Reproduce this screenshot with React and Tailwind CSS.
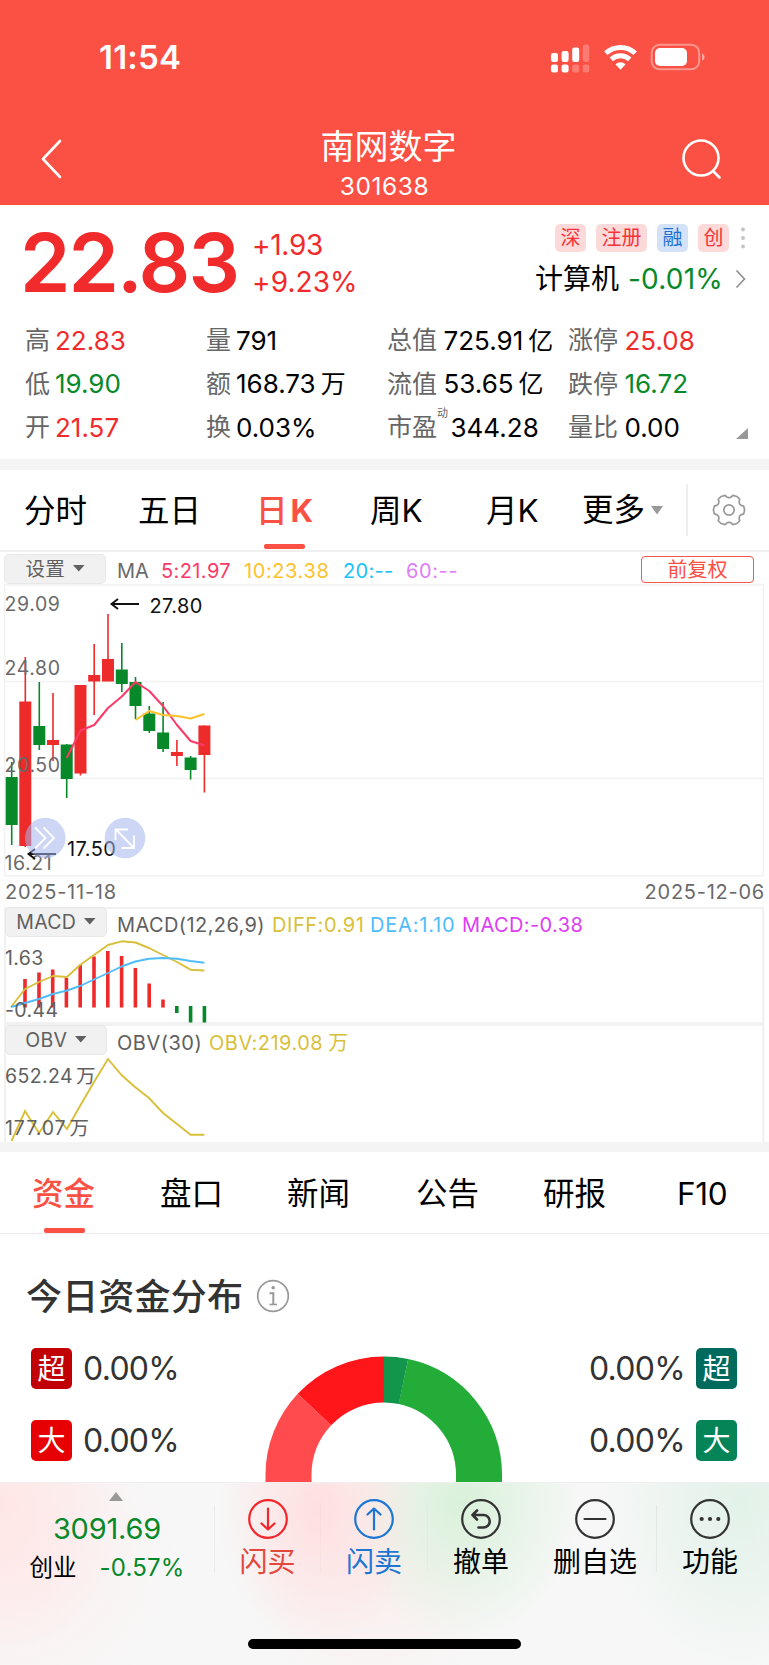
import React from "react";

const RED = "#ee2b2b";
const GREEN = "#07892a";

const Caret = ({ className }) => (
  <svg viewBox="0 0 12 7" preserveAspectRatio="none" className={className}>
    <path d="M0 0h12L6 7z" fill="currentColor" />
  </svg>
);

function StatusBar() {
  return (
    <div className="flex h-[116px] items-center pl-[99px]">
      <div className="-mt-[1px] w-[452px] text-[33px] leading-none font-semibold tracking-[0.200px]">11:54</div>
      <svg width="160" height="32" viewBox="0 0 160 32" className="shrink-0">
        <g fill="#fff">
          <rect x="0" y="11" width="7" height="9" rx="2.2" />
          <rect x="10.6" y="9" width="7" height="11" rx="2.2" />
          <rect x="21.2" y="5.500" width="7" height="14.500" rx="2.2" />
          <rect x="31.800" y="2.500" width="6.500" height="17.500" rx="2.200" opacity=".25" />
          <rect x="0" y="22.500" width="7" height="8" rx="2.2" />
          <rect x="10.600" y="22.500" width="7" height="8" rx="2.2" />
          <rect x="21.200" y="22.500" width="7" height="8" rx="2.2" opacity=".25" />
          <rect x="31.800" y="22.500" width="6.500" height="8" rx="2.2" opacity=".25" />
        </g>
        <g transform="translate(0 -1)">
          <g fill="none" stroke="#fff" strokeWidth="5">
            <path d="M54.800 12.200A21.500 21.500 0 0 1 84.200 12.200" />
            <path d="M60.300 18.300A13.500 13.500 0 0 1 78.700 18.300" />
          </g>
          <path d="M69.500 28.800L64.400 23.200A7.500 7.500 0 0 1 74.600 23.200Z" fill="#fff" />
          <rect x="100.700" y="3.700" width="47.500" height="24.600" rx="8" fill="none" stroke="#fff" strokeOpacity=".4" strokeWidth="2" />
          <rect x="104" y="7" width="32" height="18" rx="5" fill="#fff" />
          <path d="M151 12.500c3.400 1.200 3.400 6 0 7.200z" fill="#fff" opacity=".5" />
        </g>
      </svg>
    </div>
  );
}

function Header() {
  return (
    <header className="h-[205px] bg-[#fb5044] text-white">
      <StatusBar />
      <div className="flex h-[85px] items-center px-10">
        <svg width="100" height="44" viewBox="0 0 100 44" className="shrink-0">
          <path d="M20 4L3 22L20 40" fill="none" stroke="#fff" strokeWidth="2.600" strokeLinecap="round" strokeLinejoin="round" />
        </svg>
        <div className="flex flex-1 flex-col items-center pt-[8px] pl-[8px]">
          <div className="text-[34px] leading-[46px]">南网数字</div>
          <div className="-ml-[8px] text-[24.500px] leading-[32px] tracking-[0.600px]">301638</div>
        </div>
        <svg width="100" height="44" viewBox="0 0 100 44" className="shrink-0">
          <circle cx="72" cy="21" r="17.500" fill="none" stroke="#fff" strokeWidth="2.600" />
          <path d="M84 34L90.500 40.500" stroke="#fff" strokeWidth="2.600" strokeLinecap="round" />
        </svg>
      </div>
    </header>
  );
}

const Tag = ({ children, blue }) => (
  <span className={"flex h-[28px] items-center rounded-[5px] px-[5.500px] text-[20px] leading-none " + (blue ? "bg-[#d3e2f6] text-[#1d71d2]" : "bg-[#fddada] text-[#f63338]")}>
    {children}
  </span>
);

const STATS = [
  ["高", "22.83", "text-[#f12b2c]"], ["量", "791", "text-black"], ["总值", "725.91", "text-black", "亿"], ["涨停", "25.08", "text-[#f12b2c]"],
  ["低", "19.90", "text-[#07892a]"], ["额", "168.73", "text-black", "万"], ["流值", "53.65", "text-black", "亿"], ["跌停", "16.72", "text-[#07892a]"],
  ["开", "21.57", "text-[#f12b2c]"], ["换", "0.03%", "text-black"], ["市盈", "344.28", "text-black"], ["量比", "0.00", "text-black"],
];

function Quote() {
  return (
    <section className="h-[254px]">
      <div className="flex h-[114px] items-start text-[#f12b2c]">
        <div className="w-[230px] pl-[20px] text-[81px] leading-[116px] font-semibold tracking-[-2px]">22.83</div>
        <div className="pt-[22px] pl-[22px] text-[28px] leading-[37px]">
          <div className="tracking-[-0.300px]">+1.93</div>
          <div className="tracking-[0.100px]">+9.23%</div>
        </div>
        <div className="ml-auto flex flex-col items-end pt-[19px] pr-[22px]">
          <div className="flex items-center gap-[10px]">
            <Tag>深</Tag>
            <Tag>注册</Tag>
            <Tag blue>融</Tag>
            <Tag>创</Tag>
            <svg width="4" height="22" viewBox="0 0 4 22" className="mx-[2px]">
              <g fill="#c4c4c4"><circle cx="2" cy="2.500" r="2" /><circle cx="2" cy="11" r="2" /><circle cx="2" cy="19.500" r="2" /></g>
            </svg>
          </div>
          <div className="mt-[7px] mr-[1px] flex items-center text-[28px] leading-[40px]">
            <span className="text-black">计算机</span>
            <span className="ml-[9px] w-[107px] tracking-[0.200px] whitespace-nowrap text-[#07892a]">-0.01%</span>
            <svg width="11" height="20" viewBox="0 0 11 20">
              <path d="M1.500 1.500L9.500 10L1.500 18.500" fill="none" stroke="#8c8c8c" strokeWidth="1.600" />
            </svg>
          </div>
        </div>
      </div>
      <div className="grid grid-cols-[181px_181px_181px_1fr] pl-[25px]">
        {STATS.map(([label, value, color, unit]) => (
          <div key={label} className="flex h-[43.500px] items-center whitespace-nowrap">
            <span className="text-[25px] leading-none text-[#666]">{label}</span>
            {label === "市盈" && <span className="-mr-[4px] -mt-[29px] text-[11px] leading-none text-[#666]">动</span>}
            <span className={"text-[26px] leading-none tracking-[0px] " + (label.length > 1 ? "ml-[6.500px] " : "ml-[5px] ") + color}>
              {value}
              {unit && <span className="ml-[5px] text-[25px]">{unit}</span>}
            </span>
            {label === "量比" && (
              <svg width="12" height="11" viewBox="0 0 12 11" className="mt-[12px] mr-[21px] ml-auto">
                <path d="M12 0V11H0z" fill="#999" />
              </svg>
            )}
          </div>
        ))}
      </div>
    </section>
  );
}

// Outline of a six-toothed cog, as [radius, degrees from the tooth's axis].
const COG_PROFILE = [[13, -21], [15.2, -15], [15.6, 0], [15.2, 15], [13, 21], [12.2, 30]];
const COG_POINTS = [0, 60, 120, 180, 240, 300]
  .flatMap((base) => COG_PROFILE.map(([r, a]) => {
    const t = ((base + a) * Math.PI) / 180;
    return `${(r * Math.cos(t)).toFixed(2)},${(r * Math.sin(t)).toFixed(2)}`;
  }))
  .join(" ");

function PeriodTabs() {
  return (
    <nav className="flex h-[82px] border-b-2 border-[#efefef] pl-[24px] text-[31.500px] leading-[82px] whitespace-nowrap text-black">
      <div className="w-[114px]">分时</div>
      <div className="w-[122px]">五日</div>
      <div className="flex w-[110px] flex-col">
        <div className="-ml-[4px] h-[74px] text-[#fb5044]"><span className="font-medium">日</span><span className="ml-[3px] font-bold">K</span></div>
        <div className="ml-[4px] h-[5px] w-[41px] rounded-[2px] bg-[#fb5044]" />
      </div>
      <div className="w-[116px]">周K</div>
      <div className="w-[96px]">月K</div>
      <div className="flex w-[104px] items-center">
        更多
        <Caret className="ml-[6px] h-[8.500px] w-[12px] text-[#999]" />
      </div>
      <div className="mt-[14px] h-[52px] w-[2px] bg-[#eeeeee]" />
      <svg width="34" height="34" viewBox="-17 -17 34 34" className="mt-[23px] ml-[24px]" fill="none" stroke="#999" strokeWidth="1.700" strokeLinejoin="round">
        <polygon points={COG_POINTS} />
        <circle r="5.200" />
      </svg>
    </nav>
  );
}

const CANDLES = [
  [11.7, 777, 825, 762, 845, GREEN], [25.3, 701.5, 846, 657, 847, RED], [39.3, 726, 745, 682, 750, GREEN],
  [53, 740, 745, 693, 761, RED], [66.7, 744.5, 779, 744, 798, GREEN], [80.5, 685, 773.5, 685, 775.5, RED],
  [94.2, 675, 681.5, 644, 715, RED], [108, 659, 681.5, 614, 681, RED], [121.8, 669.5, 684, 643, 692, GREEN],
  [135.5, 682, 706, 677, 719, GREEN], [149.3, 713.5, 731, 706, 733, GREEN], [163.1, 732.5, 749, 702, 752, GREEN],
  [176.9, 752, 756, 740, 766, RED], [190.6, 757.5, 770, 756, 779.5, GREEN], [204.4, 725.5, 755, 725.5, 792.5, RED],
];

function KLine() {
  return (
    <svg width="769" height="293" viewBox="0 584 769 293" className="block">
      <g stroke="#f2f2f2" strokeWidth="1.500">
        <path d="M4 585H764M4 681.500H764M4 778.500H764M4 875.800H764M4.800 584.500V876M763.200 584.500V876" fill="none" />
      </g>
      {CANDLES.map(([x, top, bottom, high, low, color]) => (
        <g key={x} fill={color}>
          <rect x={x - 0.8} y={high} width="1.600" height={low - high} />
          <rect x={x - 6} y={top} width="12" height={bottom - top} />
        </g>
      ))}
      <g fontSize="19.500" fill="#6a6a6a" letterSpacing=".6">
        <text x="4.500" y="610.500">29.09</text>
        <text x="4.500" y="675">24.80</text>
        <text x="4.500" y="772">20.50</text>
        <text x="4.500" y="869.500">16.21</text>
      </g>
      <g fill="none" strokeWidth="2" strokeLinejoin="round">
        <path stroke="#fc3a68" d="M66.700 758L80.500 730.500L94.200 725L108 708L121.800 696.500L135.500 682L149.300 691L163 706L177 725L190.600 741L204.400 745.500" />
        <path stroke="#fcc22b" d="M135.500 720L149.300 711L163 715L177 716L190.600 718.500L204.400 714" />
      </g>
      <g fontSize="20" fill="#111" letterSpacing=".4">
        <text x="149.500" y="612.500">27.80</text>
        <text x="67" y="855.500">17.50</text>
      </g>
      <path d="M139 604H111.500M118 599L111.500 604L118 609M56 854H28.500M35 849L28.500 854L35 859" fill="none" stroke="#111" strokeWidth="1.900" />
      <g>
        <circle cx="45.300" cy="838" r="20.300" fill="#a4b7ec" fillOpacity=".55" />
        <circle cx="125" cy="838" r="20.300" fill="#a4b7ec" fillOpacity=".55" />
        <g fill="none" stroke="#fff" strokeWidth="1.800">
          <path d="M35 827.500L45.500 838L35 848.500M43.500 827.500L54 838L43.500 848.500" />
          <path d="M115.500 840V829.500H128M116 829.500L134 848M134 835.500V848H121.500" />
        </g>
      </g>
    </svg>
  );
}

const Pill = ({ children }) => (
  <div className="flex h-[30px] w-[102px] items-center justify-center gap-[8px] rounded-[5px] border border-[#e8e8e8] bg-[#f1f1f1] pt-[2px] text-[19.500px] leading-none tracking-[0.300px] text-[#606060]">
    {children}
    <Caret className="-mt-[3px] h-[6.500px] w-[11.500px]" />
  </div>
);

const MACD_BARS = [
  [25, 979], [39, 972.5], [52.7, 969.5], [66.4, 978], [80.2, 965], [94, 956.5], [107.8, 951], [121.6, 956], [135.4, 968], [149.2, 983.5], [163, 999.5],
];

function MacdPanel() {
  return (
    <div className="grid h-[117px]">
      <svg width="769" height="117" viewBox="0 907 769 117" className="[grid-area:1/1]">
        <path d="M4 908H764M4 1023H764M5 907.500V1024M763.200 907.500V1024" fill="none" stroke="#f1f1f1" strokeWidth="2" />
        {MACD_BARS.map(([x, y]) => <rect key={x} x={x - 1.8} y={y} width="3.600" height={1007.500 - y} fill={RED} />)}
        <g fill={GREEN}>
          <rect x="175" y="1006" width="3.600" height="7" />
          <rect x="188.800" y="1006" width="3.600" height="16.500" />
          <rect x="202.600" y="1006" width="3.600" height="16.500" />
        </g>
        <g fill="none" strokeWidth="1.900" strokeLinejoin="round">
          <path stroke="#d8c03a" d="M11 1007L25 989L39 982L53 976L67 977L80 965L94 955L108 945L121.500 941.300L135.500 942.500L149 948L163 955L177 962L190.500 969.700L204.400 970.500" />
          <path stroke="#4fbcfb" d="M11 1007L25 1003L39 999L53 994L67 990.500L80 986L94 979.500L108 973L121.500 966.500L135.500 961.500L149 958.700L163 958L177 958.700L190.500 961L204.400 962.700" />
        </g>
        <g fontSize="19.500" fill="#606060" letterSpacing=".4">
          <text x="5" y="965">1.63</text>
          <text x="5" y="1016.500">-0.44</text>
        </g>
      </svg>
      <div className="flex h-[32px] items-start pl-[5px] text-[20px] leading-[37px] whitespace-nowrap [grid-area:1/1]">
        <Pill>MACD</Pill>
        <span className="ml-[10px] w-[155px] tracking-[0.400px] text-[#606060]">MACD(12,26,9)</span>
        <span className="w-[98px] tracking-[0.550px] text-[#d8c03a]">DIFF:0.91</span>
        <span className="w-[92px] tracking-[0.800px] text-[#4fbcfb]">DEA:1.10</span>
        <span className="tracking-[0.400px] text-[#dd3df2]">MACD:-0.38</span>
      </div>
    </div>
  );
}

function ObvPanel() {
  return (
    <div className="grid h-[118px]">
      <svg width="769" height="118" viewBox="0 1024 769 118" className="[grid-area:1/1]">
        <path d="M4 1025H764M5 1024V1142M763.200 1024V1142" fill="none" stroke="#f1f1f1" strokeWidth="2" />
        <path fill="none" stroke="#d8c03a" strokeWidth="1.900" d="M11.500 1141L25 1111L39 1133L53 1112L67 1129L80 1106L94 1082L108 1059L121.500 1075L135 1087L149 1098L163 1113L177 1124L190.600 1134.700L204.400 1134.700" />
        <g fontSize="19.500" fill="#606060" letterSpacing=".4">
          <text x="5" y="1082.500">652.24<tspan dx="3">万</tspan></text>
          <text x="5" y="1134.500" letterSpacing=".9">177.07<tspan dx="3">万</tspan></text>
        </g>
      </svg>
      <div className="flex h-[32px] items-start pt-px pl-[5px] text-[20px] leading-[37px] whitespace-nowrap [grid-area:1/1]">
        <Pill>OBV</Pill>
        <span className="ml-[10px] w-[92px] tracking-[0.500px] text-[#606060]">OBV(30)</span>
        <span className="tracking-[0.500px] text-[#d8c03a]">OBV:219.08<span className="ml-[5px]">万</span></span>
      </div>
    </div>
  );
}

function Charts() {
  return (
    <section>
      <div className="flex h-[32px] items-center pt-[2px] pl-[4px] text-[20px] leading-none whitespace-nowrap">
        <Pill>设置</Pill>
        <span className="mt-[3px] ml-[11px] w-[44px] text-[#6a6a6a]">MA</span>
        <span className="mt-[3px] w-[83px] tracking-[0.400px] text-[#fc3a68]">5:21.97</span>
        <span className="mt-[3px] w-[99px] tracking-[0.600px] text-[#fcc22b]">10:23.38</span>
        <span className="mt-[3px] w-[63px] tracking-[0.300px] text-[#18c3f8]">20:--</span>
        <span className="mt-[3px] tracking-[0.600px] text-[#e07df8]">60:--</span>
        <div className="mr-[15px] ml-auto flex h-[27px] w-[113px] items-center justify-center rounded-[4px] border-[1.500px] border-[#f4574b] pt-[2px] text-[20px] text-[#fb5044]">前复权</div>
      </div>
      <KLine />
      <div className="flex h-[30px] justify-between pr-[4px] pl-[5px] text-[20px] leading-[31px] tracking-[0.750px] text-[#6a6a6a]">
        <span>2025-11-18</span>
        <span>2025-12-06</span>
      </div>
      <MacdPanel />
      <ObvPanel />
    </section>
  );
}

function InfoTabs() {
  return (
    <nav className="flex h-[82px] border-b border-[#ececec] pl-[32px] text-[31.500px] leading-[83px] whitespace-nowrap text-black">
      <div className="flex w-[128px] flex-col">
        <div className="h-[76px] font-medium text-[#fb5044]">资金</div>
        <div className="ml-[12px] h-[5px] w-[41px] rounded-[2px] bg-[#fb5044]" />
      </div>
      <div className="w-[127px]">盘口</div>
      <div className="w-[129px]">新闻</div>
      <div className="w-[127px]">公告</div>
      <div className="w-[134px]">研报</div>
      <div className="tracking-[-0.300px]">F10</div>
    </nav>
  );
}

const Flow = ({ label, color, right }) => (
  <div className={"flex h-[72px] items-center gap-[11px] text-[32px] leading-none text-[#333] " + (right ? "flex-row-reverse" : "")}>
    <span className={"flex h-[41px] w-[41px] items-center justify-center rounded-[5px] pt-[2px] text-[28px] text-white " + color}>{label}</span>
    <span className="pt-[2px] tracking-[-0.700px]">0.00%</span>
  </div>
);

function Funds() {
  return (
    <section className="h-[248px]">
      <div className="flex h-[98px] items-center pt-[26px] pl-[26px] text-[36px] leading-none font-medium text-[#333]">
        <span className="pt-[2px] tracking-[0.200px]">今日资金分布</span>
        <svg width="34" height="34" viewBox="0 0 34 34" className="ml-[13px]">
          <circle cx="17" cy="17" r="15.300" fill="none" stroke="#999" strokeWidth="1.700" />
          <circle cx="17.200" cy="8.800" r="1.800" fill="#999" />
          <path d="M13.500 14.300H17.300V25.500" fill="none" stroke="#999" strokeWidth="2" />
          <path d="M13.500 25.500H21" fill="none" stroke="#999" strokeWidth="1.600" />
        </svg>
      </div>
      <div className="flex h-[150px] justify-between pr-[32px] pl-[31px]">
        <div>
          <Flow label="超" color="bg-[#c10006]" />
          <Flow label="大" color="bg-[#e60003]" />
        </div>
        <svg width="240" height="150" viewBox="265 1332 240 150">
          <g fill="none" strokeWidth="46">
            <path stroke="#23ac38" d="M404.400 1381.500A95.500 95.500 0 0 1 480 1475V1482" />
            <path stroke="#12964b" d="M385 1379.500A95.500 95.500 0 0 1 404.500 1381.500" />
            <path stroke="#ff4a4e" d="M289.500 1482V1475A95.500 95.500 0 0 1 315.500 1409.500" />
            <path stroke="#ff161b" d="M315.500 1409.500A95.500 95.500 0 0 1 385 1379.500" />
          </g>
        </svg>
        <div>
          <Flow label="超" color="bg-[#006b5d]" right />
          <Flow label="大" color="bg-[#058457]" right />
        </div>
      </div>
    </section>
  );
}

const Action = ({ label, width, color, children }) => (
  <div className={"flex flex-col items-center " + width + " " + color}>
    <svg width="42" height="42" viewBox="-21 -21 42 42" fill="none" stroke="currentColor" strokeWidth="2.200" strokeLinecap="round" strokeLinejoin="round">
      <circle r="18.800" />
      {children}
    </svg>
    <div className="mt-[1px] text-[28px] leading-[42px] whitespace-nowrap">{label}</div>
  </div>
);

const Divider = ({ faint }) => <div className={"mt-[7px] h-[67px] w-px " + (faint ? "bg-black/2" : "bg-black/5")} />;

function BottomBar() {
  return (
    <footer className="flex h-[183px] flex-col justify-between border-t border-[#efefef] bg-[#f7f7f7] bg-[radial-gradient(ellipse_130px_150px_at_0px_20px,#ffe6e6_0%,#ffe6e600_100%),radial-gradient(ellipse_100px_140px_at_318px_25px,#ffdfe0_0%,#ffdfe000_100%),radial-gradient(ellipse_120px_140px_at_462px_20px,#d9f1da_0%,#d9f1da00_100%),radial-gradient(ellipse_140px_170px_at_740px_20px,#e2f2e9_0%,#e2f2e900_100%),radial-gradient(ellipse_180px_150px_at_0px_80px,#fdeeee_0%,#fdeeee00_100%),radial-gradient(ellipse_130px_130px_at_370px_90px,#fbeeee_0%,#fbeeee00_100%)] pb-[16px]">
      <div className="flex pt-[15px]">
        <div className="flex w-[214px] flex-col items-center">
          <svg width="14" height="9" viewBox="0 0 14 9" className="-mt-[6px] ml-[17px]"><path d="M7 0L14 9H0z" fill="#999" /></svg>
          <div className="mt-[8px] text-[29px] leading-[40px] tracking-[-0.200px] text-[#07892a]">3091.69</div>
          <div className="flex items-center text-[24px] leading-[38px] text-black"><span className="text-[23.500px]">创业</span><span className="ml-[23px] tracking-[0.200px] text-[#07892a]">-0.57%</span></div>
        </div>
        <Divider />
        <Action label="闪买" width="w-[105px]" color="text-[#f2262b] [&>div]:text-[#e2493c]"><path d="M0-10.500V10.500M-6.500 4.500L0 10.500L6.500 4.500" /></Action>
        <Divider faint />
        <Action label="闪卖" width="w-[106px]" color="text-[#1c76d4]"><path d="M0 10.500V-10.500M-6.500-4.500L0-10.500L6.500-4.500" /></Action>
        <Divider faint />
        <Action label="撤单" width="w-[106px]" color="text-[#333] [&>div]:text-black"><path strokeWidth="2.600" d="M-4-8.500L-8.500-4L-4 .5M-8.500-4H2.500A6 6 0 0 1 2.500 8.500H-2.500" /></Action>
        <Action label="删自选" width="w-[122px]" color="text-[#333] [&>div]:text-black"><path d="M-10.500 0H10.500" /></Action>
        <Divider />
        <Action label="功能" width="w-[106px]" color="text-[#333] [&>div]:text-black">
          <g fill="currentColor" stroke="none"><circle cx="-8.300" r="2.100" /><circle r="2.100" /><circle cx="8.300" r="2.100" /></g>
        </Action>
      </div>
      <div className="h-[10px] w-[273px] self-center rounded-full bg-black" />
    </footer>
  );
}

export default function App() {
  return (
    <div className="h-[1665px] w-[769px] overflow-hidden bg-white font-['Inter','Noto_Sans_CJK_SC',sans-serif]">
      <Header />
      <Quote />
      <div className="h-[11px] bg-[#f4f4f4]" />
      <PeriodTabs />
      <Charts />
      <div className="h-[10px] bg-[#f4f4f4]" />
      <InfoTabs />
      <Funds />
      <BottomBar />
    </div>
  );
}
